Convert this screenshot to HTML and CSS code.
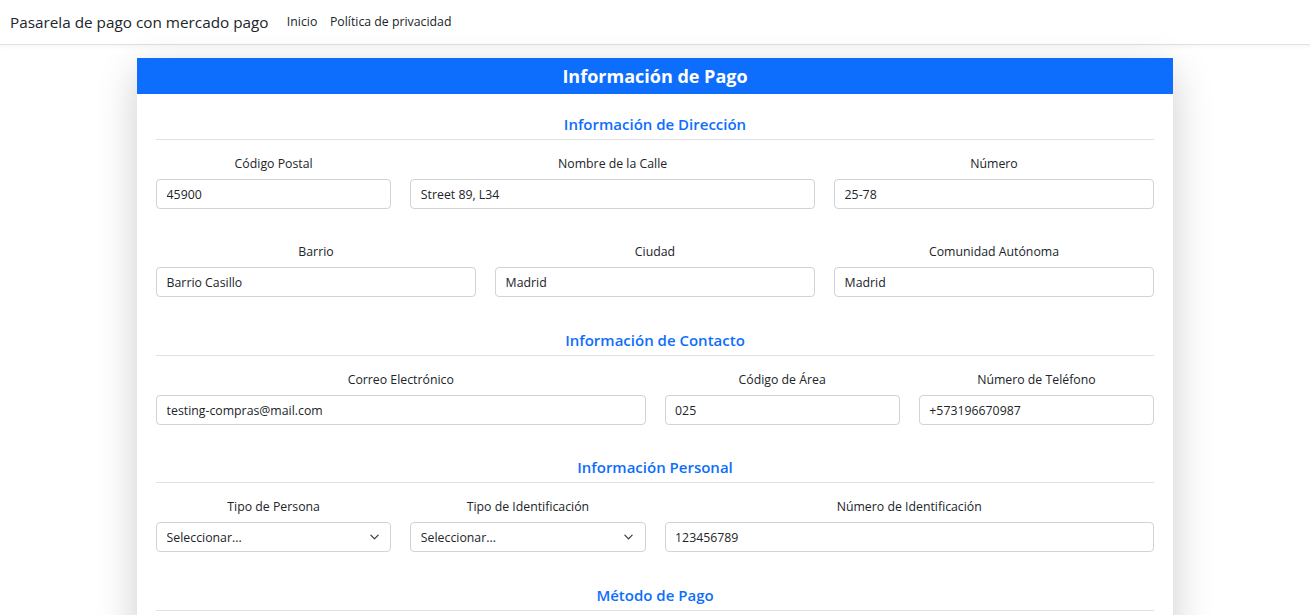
FILE: index.html
```html
<!DOCTYPE html>
<html lang="es">
<head>
<meta charset="utf-8">
<title>Pasarela de pago</title>
<link rel="stylesheet" href="styles.css">
</head>
<body>
<nav class="navbar">
  <span class="brand">Pasarela de pago con mercado pago</span>
  <a class="nav-link" href="#">Inicio</a>
  <a class="nav-link" href="#">Política de privacidad</a>
</nav>
<main class="card">
  <div class="card-header">Información de Pago</div>
  <div class="card-body">
    <section class="section">
      <h5 class="section-title">Información de Dirección</h5>
      <hr class="divider">
      <div class="row">
        <div class="field span-3"><label>Código Postal</label><input class="control" value="45900"></div>
        <div class="field span-5"><label>Nombre de la Calle</label><input class="control" value="Street 89, L34"></div>
        <div class="field span-4"><label>Número</label><input class="control" value="25-78"></div>
      </div>
      <div class="row">
        <div class="field span-4"><label>Barrio</label><input class="control" value="Barrio Casillo"></div>
        <div class="field span-4"><label>Ciudad</label><input class="control" value="Madrid"></div>
        <div class="field span-4"><label>Comunidad Autónoma</label><input class="control" value="Madrid"></div>
      </div>
    </section>
    <section class="section">
      <h5 class="section-title">Información de Contacto</h5>
      <hr class="divider">
      <div class="row">
        <div class="field span-6"><label>Correo Electrónico</label><input class="control" value="testing-compras@mail.com"></div>
        <div class="field span-3"><label>Código de Área</label><input class="control" value="025"></div>
        <div class="field span-3"><label>Número de Teléfono</label><input class="control" value="+573196670987"></div>
      </div>
    </section>
    <section class="section">
      <h5 class="section-title">Información Personal</h5>
      <hr class="divider">
      <div class="row">
        <div class="field span-3"><label>Tipo de Persona</label><select class="control select"><option>Seleccionar...</option></select></div>
        <div class="field span-3"><label>Tipo de Identificación</label><select class="control select"><option>Seleccionar...</option></select></div>
        <div class="field span-6"><label>Número de Identificación</label><input class="control" value="123456789"></div>
      </div>
    </section>
    <section class="section">
      <h5 class="section-title">Método de Pago</h5>
      <hr class="divider">
    </section>
  </div>
</main>
</body>
</html>
```
FILE: styles.css
```css
* { box-sizing: border-box; }
html, body { margin: 0; padding: 0; }
body {
  font-family: "Open Sans", "Noto Sans", "Liberation Sans", sans-serif;
  font-size: 12.8px;
  line-height: 1.5;
  color: #212529;
  background: #fff;
  overflow: hidden;
}
.navbar {
  display: flex;
  align-items: center;
  height: 45px;
  padding: 0 10px;
  border-bottom: 1px solid #dee2e6;
  box-shadow: 0 2px 4px rgba(0,0,0,.04);
  margin-bottom: 13px;
}
.brand {
  font-size: 15.3px;
  color: #212529;
  margin-right: 12px;
}
.nav-link {
  color: #212529;
  text-decoration: none;
  font-size: 12.3px;
  padding: 0 6.3px;
}
.card {
  width: 1036px;
  margin: 0 auto;
  background: #fff;
  box-shadow: 0 13px 38px rgba(0,0,0,.2);
}
.card-header {
  background: #0d6efd;
  color: #fff;
  height: 36px;
  line-height: 36px;
  text-align: center;
  font-weight: 700;
  font-size: 18px;
}
.card-body {
  padding: 20px 19px 40px;
}
.section + .section { margin-top: 33px; }
.section:nth-child(3) { margin-top: 32px; }
.section-title {
  margin: 0;
  color: #0d6efd;
  font-size: 15px;
  font-weight: 600;
  line-height: 20px;
  text-align: center;
}
.divider {
  border: 0;
  border-top: 1px solid #dee2e6;
  margin: 5px 0 14px;
}
.row {
  display: grid;
  grid-template-columns: repeat(12, 1fr);
  column-gap: 19px;
}
.row + .row { margin-top: 33px; }
.span-3 { grid-column: span 3; }
.span-4 { grid-column: span 4; }
.span-5 { grid-column: span 5; }
.span-6 { grid-column: span 6; }
.field label {
  display: block;
  text-align: center;
  margin-bottom: 6px;
  line-height: 19px;
  font-size: 12.3px;
}
.control {
  display: block;
  width: 100%;
  height: 30px;
  padding: 0 9.6px;
  font-family: inherit;
  font-size: 12.3px;
  color: #212529;
  background: #fff;
  border: 1px solid #ced4da;
  border-radius: 4px;
  outline: none;
}
.select {
  appearance: none;
  -webkit-appearance: none;
  padding-right: 30px;
  background-image: url("data:image/svg+xml,%3csvg xmlns='http://www.w3.org/2000/svg' viewBox='0 0 16 16'%3e%3cpath fill='none' stroke='%23343a40' stroke-linecap='round' stroke-linejoin='round' stroke-width='2' d='m2 5 6 6 6-6'/%3e%3c/svg%3e");
  background-repeat: no-repeat;
  background-position: right 9.6px center;
  background-size: 12.8px 9.6px;
}
```
